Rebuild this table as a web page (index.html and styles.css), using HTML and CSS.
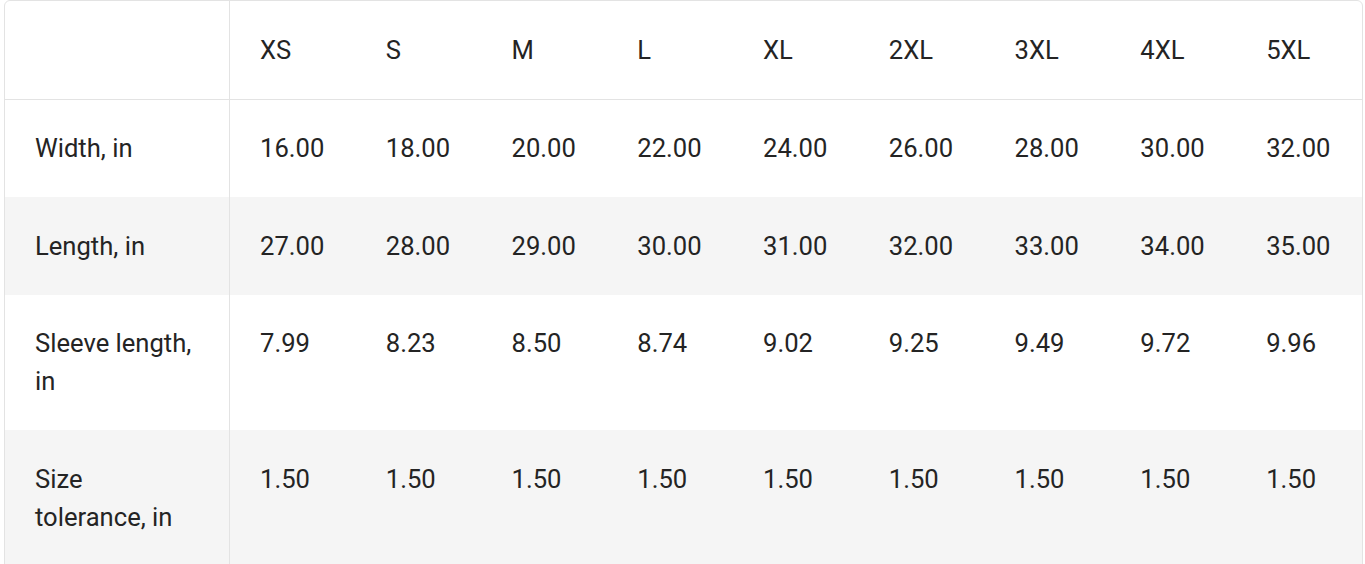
FILE: index.html
```html
<!DOCTYPE html>
<html lang="en">
<head>
<meta charset="utf-8">
<title>Size chart</title>
<link rel="stylesheet" href="styles.css">
</head>
<body>
<div class="wrap">
<table class="sizes">
  <colgroup>
    <col class="col-label">
    <col span="9" class="col-size">
  </colgroup>
  <thead>
    <tr>
      <th class="label"></th>
      <th>XS</th><th>S</th><th>M</th><th>L</th><th>XL</th><th>2XL</th><th>3XL</th><th>4XL</th><th>5XL</th>
    </tr>
  </thead>
  <tbody>
    <tr>
      <td class="label">Width, in</td>
      <td>16.00</td><td>18.00</td><td>20.00</td><td>22.00</td><td>24.00</td><td>26.00</td><td>28.00</td><td>30.00</td><td>32.00</td>
    </tr>
    <tr class="alt">
      <td class="label">Length, in</td>
      <td>27.00</td><td>28.00</td><td>29.00</td><td>30.00</td><td>31.00</td><td>32.00</td><td>33.00</td><td>34.00</td><td>35.00</td>
    </tr>
    <tr>
      <td class="label">Sleeve length, in</td>
      <td>7.99</td><td>8.23</td><td>8.50</td><td>8.74</td><td>9.02</td><td>9.25</td><td>9.49</td><td>9.72</td><td>9.96</td>
    </tr>
    <tr class="alt">
      <td class="label">Size tolerance, in</td>
      <td>1.50</td><td>1.50</td><td>1.50</td><td>1.50</td><td>1.50</td><td>1.50</td><td>1.50</td><td>1.50</td><td>1.50</td>
    </tr>
  </tbody>
</table>
</div>
</body>
</html>
```

FILE: styles.css
```css
html, body {
  margin: 0;
  padding: 0;
  background: #ffffff;
}

.wrap {
  padding: 0 0 0 4px;
}

.sizes {
  width: 1359px;
  table-layout: fixed;
  border-collapse: separate;
  border-spacing: 0;
  border: 1px solid #e3e3e3;
  border-radius: 6px 6px 0 0;
  font-family: Roboto, "Liberation Sans", Arial, sans-serif;
  font-size: 25.6px;
  line-height: 38px;
  color: #242424;
}

.col-label {
  width: 225px;
}

.sizes th,
.sizes td {
  padding: 29.75px 30px;
  text-align: left;
  vertical-align: top;
  font-weight: 400;
}

.sizes th {
  border-bottom: 1px solid #e3e3e3;
}

.sizes .label {
  border-right: 1px solid #e3e3e3;
  padding-right: 32px;
}

.sizes tr.alt td {
  background: #f5f5f5;
}
```
